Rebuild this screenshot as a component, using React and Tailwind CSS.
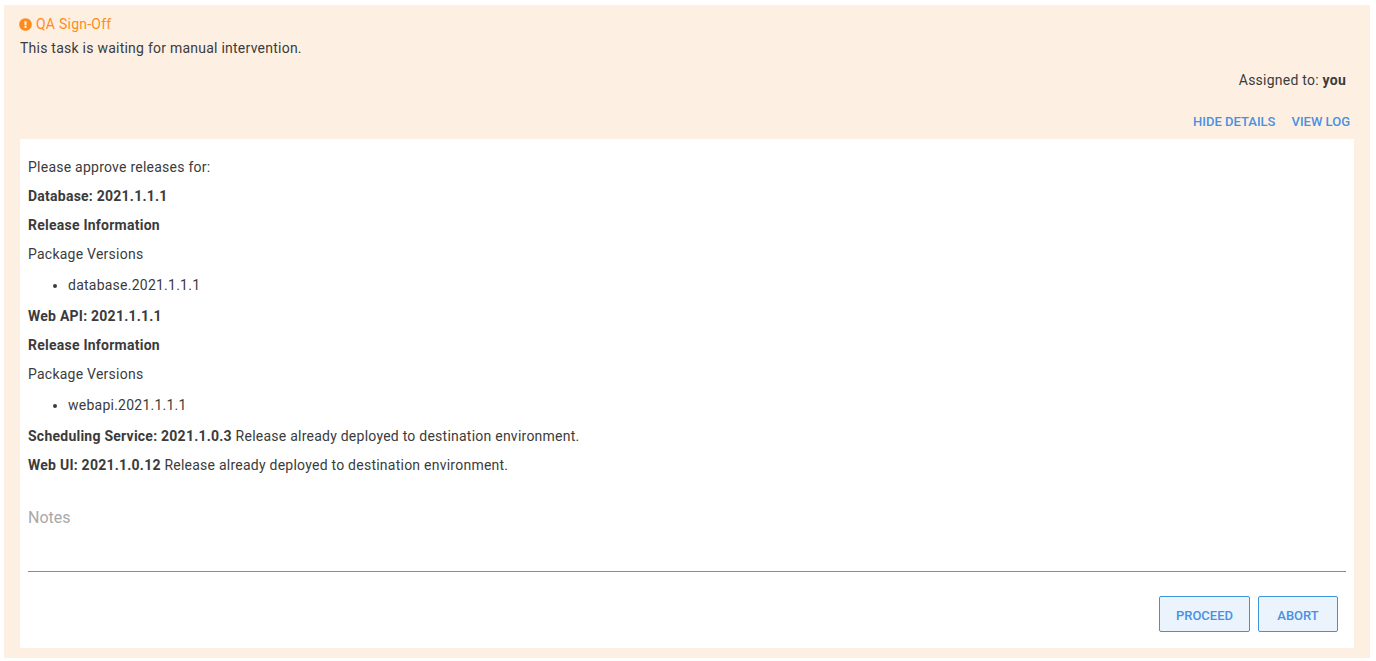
const Line = ({ children }) => <p className="h-[29px] leading-[29px]">{children}</p>

const VersionList = ({ name }) => (
  <ul className="h-[33px] list-disc pl-10 leading-[33px]">
    <li>{name}</li>
  </ul>
)

export default function App() {
  return (
    <div className="h-[661px] bg-white pl-1 pr-[6px] pt-[5px] pb-[3px] font-['Roboto',sans-serif] text-sm tracking-[0.24px] text-[#3b3b3b]">
      <div className="flex h-full flex-col bg-[#fdf0e3] px-4 pb-[10px]">
        <div className="mt-[9px] flex h-5 items-center gap-1 leading-5 text-[#ff8c1a]">
          <svg className="-ml-px" width="13" height="13" viewBox="0 0 512 512" fill="currentColor">
            <path d="M504 256c0 136.997-111.043 248-248 248S8 392.997 8 256C8 119.083 119.043 8 256 8s248 111.083 248 248zm-248 50c-25.405 0-46 20.595-46 46s20.595 46 46 46 46-20.595 46-46-20.595-46-46-46zm-43.673-165.346l7.418 136c.347 6.364 5.609 11.346 11.982 11.346h48.546c6.373 0 11.635-4.982 11.982-11.346l7.418-136c.375-6.874-5.098-12.654-11.982-12.654h-63.383c-6.884 0-12.356 5.78-11.981 12.654z" />
          </svg>
          <span>QA Sign-Off</span>
        </div>
        <p className="mt-1 h-5 leading-5">This task is waiting for manual intervention.</p>
        <p className="mt-3 pr-2 text-right leading-5">
          Assigned to: <strong className="font-bold">you</strong>
        </p>
        <div className="mt-[21px] flex h-[23px] items-center justify-end gap-4 pr-1 text-[13px] font-medium tracking-normal text-[#4a90e2]">
          <a>HIDE DETAILS</a>
          <a>VIEW LOG</a>
        </div>
        <div className="mt-[5px] flex min-h-0 flex-1 flex-col bg-white px-2 pt-[14px]">
          <Line>Please approve releases for:</Line>
          <Line><strong className="font-bold">Database: 2021.1.1.1</strong></Line>
          <Line><strong className="font-bold">Release Information</strong></Line>
          <Line>Package Versions</Line>
          <VersionList name="database.2021.1.1.1" />
          <Line><strong className="font-bold">Web API: 2021.1.1.1</strong></Line>
          <Line><strong className="font-bold">Release Information</strong></Line>
          <Line>Package Versions</Line>
          <VersionList name="webapi.2021.1.1.1" />
          <Line>
            <strong className="font-bold">Scheduling Service: 2021.1.0.3</strong> Release already deployed to destination environment.
          </Line>
          <Line>
            <strong className="font-bold">Web UI: 2021.1.0.12</strong> Release already deployed to destination environment.
          </Line>
          <div className="mt-[19px] h-[73px] border-b border-[#8c8c8c] pt-[7px] text-base leading-6 tracking-normal text-[#a8a8a8]">Notes</div>
          <div className="mt-6 flex justify-end gap-2 pr-2">
            <button className="h-9 w-[91px] rounded-[2px] border border-[#3d94d9] bg-[#ebf4fc] pt-1 text-[13px] font-medium tracking-normal text-[#4a90e2]">PROCEED</button>
            <button className="h-9 w-[80px] rounded-[2px] border border-[#3d94d9] bg-[#ebf4fc] pt-1 text-[13px] font-medium tracking-normal text-[#4a90e2]">ABORT</button>
          </div>
        </div>
      </div>
    </div>
  )
}
